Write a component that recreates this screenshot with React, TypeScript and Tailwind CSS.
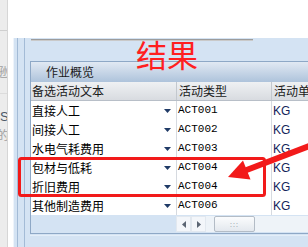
const rows = [
  { name: "直接人工", code: "ACT001" },
  { name: "间接人工", code: "ACT002" },
  { name: "水电气耗费用", code: "ACT003" },
  { name: "包材与低耗", code: "ACT004" },
  { name: "折旧费用", code: "ACT004" },
  { name: "其他制造费用", code: "ACT006" },
];

const cjk = { fontFamily: '"Noto Sans CJK SC", "Noto Sans", sans-serif' };

function DropTriangle() {
  return (
    <svg width="7" height="4" viewBox="0 0 7 4">
      <path d="M0 0 H7 L3.5 4 Z" fill="#1f3a66" />
    </svg>
  );
}

function LeftStrip() {
  return (
    <div className="relative w-[8px] shrink-0 overflow-hidden border-r border-[#d6d6d6] bg-[#ececec]">
      <div className="absolute left-0 top-[30px] h-px w-full bg-[#cfcfcf]" />
      <div className="absolute left-[-4px] top-[66px] text-[12px] leading-none text-[#a0a0a0]" style={cjk}>
        逊
      </div>
      <div className="absolute left-0 top-[93px] h-px w-full bg-[#dcdcdc]" />
      <div
        className="absolute left-0 top-[110px] text-[13px] leading-none text-[#4b5868]"
        style={{ fontFamily: '"Liberation Sans", sans-serif' }}
      >
        Sa
      </div>
      <div className="absolute left-[-3px] top-[129px] text-[12px] leading-none text-[#a0a0a0]" style={cjk}>
        的
      </div>
    </div>
  );
}

function ScrollBar() {
  return (
    <div className="flex h-[16px] flex-1 items-stretch bg-[#eef3f8]">
      <div className="flex w-[15px] items-center justify-center border border-[#e2e8ef] bg-[#f3f6fa]">
        <svg width="4" height="7" viewBox="0 0 4 7">
          <path d="M4 0 V7 L0 3.5 Z" fill="#5b6573" />
        </svg>
      </div>
      <div className="flex w-[15px] items-center justify-center border border-[#e2e8ef] bg-[#f3f6fa]">
        <svg width="4" height="7" viewBox="0 0 4 7">
          <path d="M0 0 V7 L4 3.5 Z" fill="#5b6573" />
        </svg>
      </div>
      <div className="ml-[8px] flex w-[41px] items-center justify-center rounded-[2px] border border-[#b3bcc6] bg-linear-to-b from-[#fbfcfd] to-[#e3e8ee]">
        <span className="text-[7px] leading-none tracking-[1px] text-[#9aa4b0]">:::</span>
      </div>
    </div>
  );
}

export default function App() {
  return (
    <div className="relative flex h-[247px] w-[308px] overflow-hidden bg-white" style={cjk}>
      <LeftStrip />
      <div className="w-[5px] shrink-0 bg-white" />

      <div className="flex flex-1 flex-col">
        <div className="h-[38px] bg-white" />

        <div className="flex flex-1 border-l border-[#eef4fb] bg-[#d4e3f3] pl-[3px]">
          <div className="flex flex-1 border-l border-[#a3bbd6] pl-[6px]">
            <div className="flex flex-1 flex-col border-l border-[#a3bbd6] pl-[5px]">
              <div className="h-[23px] pl-[1px] pt-[1px]">
                <div className="h-[2px] w-[222px] border-t border-b border-t-[#9c9c9c] border-b-[#c9c9c9]" />
              </div>

              <div className="flex h-[173px] flex-col border-y border-l border-[#8ea8c6]">
                <div className="flex h-[20px] items-center bg-linear-to-b from-[#e1e9f3] to-[#aec3db] pl-[15px] text-[12px] leading-none text-[#1a1a1a]">
                  作业概览
                </div>

                <div className="flex h-[19px] border-b border-[#b8bfc8] bg-linear-to-b from-[#eff1f3] to-[#d8dbe0] text-[12px] leading-none text-[#1a1a1a]">
                  <div className="flex w-[146px] items-center border-r border-[#c3c8ce] pl-[1px]">备选活动文本</div>
                  <div className="flex w-[95px] items-center border-r border-[#c3c8ce] pl-[2px]">活动类型</div>
                  <div className="flex flex-1 items-center whitespace-nowrap pl-[2px]">活动单位</div>
                </div>

                {rows.map((row, i) => (
                  <div key={i} className="flex h-[19px] bg-white text-[12px] leading-none text-black">
                    <div className="flex w-[146px] items-center justify-between border-r border-[#d6dae0] pl-[1px] pr-[5px]">
                      <span>{row.name}</span>
                      <DropTriangle />
                    </div>
                    <div
                      className="flex w-[95px] items-center border-r border-[#d6dae0] pl-[1px] text-[11px]"
                      style={{ fontFamily: '"Liberation Mono", monospace' }}
                    >
                      {row.code}
                    </div>
                    <div
                      className="flex flex-1 items-center pl-[1px] text-[#13235a]"
                      style={{ fontFamily: '"Liberation Sans", sans-serif' }}
                    >
                      KG
                    </div>
                  </div>
                ))}

                <div className="flex h-[18px] pt-[1px]">
                  <div className="w-[145px]" />
                  <ScrollBar />
                </div>
              </div>
              <div className="mt-[1px] h-px bg-[#e4eef8]" />
            </div>
          </div>
        </div>
      </div>

      {/* red annotation overlay */}
      <div
        className="absolute left-[136px] top-[38px] text-[31px] leading-[31px] text-[#ff1f1f]"
        style={cjk}
      >
        结果
      </div>
      <svg className="pointer-events-none absolute left-0 top-0" width="308" height="247" viewBox="0 0 308 247">
        <rect x="19.5" y="158.5" width="245" height="37" rx="2" fill="none" stroke="#f21a1a" strokeWidth="3" />
        <line x1="312" y1="145" x2="244" y2="171" stroke="#f21a1a" strokeWidth="6" />
        <polygon points="228,177 243,160.5 250.5,179.5" fill="#f21a1a" />
      </svg>
    </div>
  );
}
